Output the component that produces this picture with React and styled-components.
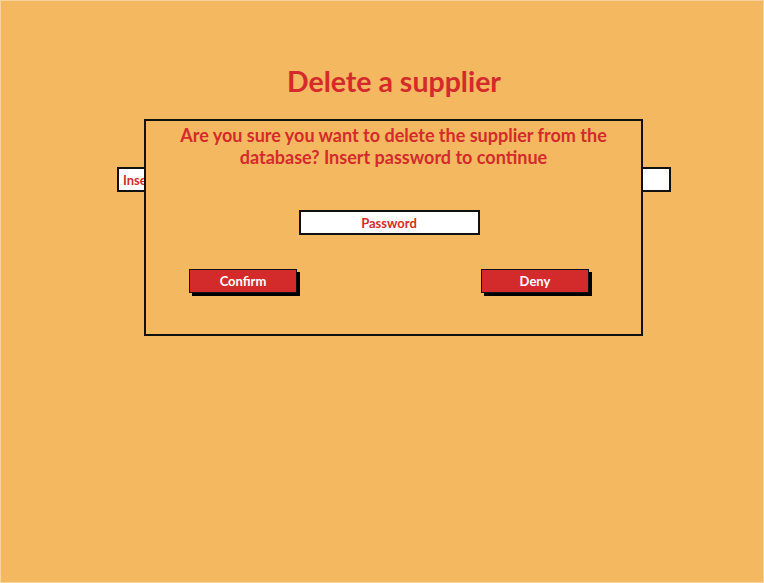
import React from "react";
import styled, { createGlobalStyle } from "styled-components";

const GlobalStyle = createGlobalStyle`
  html, body {
    margin: 0;
    padding: 0;
    background: #ffffff;
  }
  body {
    font-family: Lato, "Open Sans", sans-serif;
  }
`;

const App = () => {
  return (
    <>
      <GlobalStyle />
      <Screen>
        <Title>Delete a supplier</Title>
        <SearchBox>
          <BoxText>Insert supplier name</BoxText>
        </SearchBox>
        <Modal>
          <Message>
            Are you sure you want to delete the supplier from the
            <br />
            database? Insert password to continue
          </Message>
          <PasswordBox>Password</PasswordBox>
          <ButtonRow>
            <ActionButton>Confirm</ActionButton>
            <ActionButton>Deny</ActionButton>
          </ButtonRow>
        </Modal>
      </Screen>
    </>
  );
};

export default App;

const Screen = styled.div`
  position: relative;
  width: 762px;
  height: 581px;
  background-color: #f3b860;
  border: 1px solid #f7d49c;
  display: flex;
  flex-direction: column;
  align-items: center;
  overflow: hidden;
`;
const Title = styled.div`
  font-family: Lato, sans-serif;
  font-size: 28.5px;
  font-weight: 700;
  color: #d32b2b;
  margin: 63px 0px 0px 24px;
  line-height: 35px;
`;
const SearchBox = styled.div`
  box-sizing: border-box;
  width: 554px;
  height: 25px;
  margin: 68px 0px 0px 24px;
  background: #ffffff;
  border: 2px solid #111111;
  display: flex;
  align-items: center;
  padding: 0px 4px;
`;
const BoxText = styled.span`
  font-family: Lato, sans-serif;
  font-size: 13px;
  font-weight: 700;
  color: #d32b2b;
`;
const Modal = styled.div`
  position: absolute;
  left: 143px;
  top: 118px;
  box-sizing: border-box;
  width: 499px;
  height: 217px;
  background-color: #f3b860;
  border: 2px solid #111111;
  display: flex;
  flex-direction: column;
  align-items: center;
`;
const Message = styled.div`
  font-family: Lato, sans-serif;
  font-size: 18px;
  font-weight: 700;
  color: #d32b2b;
  text-align: center;
  line-height: 22px;
  margin: 3px 0px 0px 0px;
`;
const PasswordBox = styled.div`
  box-sizing: border-box;
  width: 181px;
  height: 25px;
  margin: 42px 9px 0px 0px;
  background: #ffffff;
  border: 2px solid #111111;
  display: flex;
  align-items: center;
  justify-content: center;
  font-family: Lato, sans-serif;
  font-size: 13px;
  font-weight: 700;
  color: #d32b2b;
`;
const ButtonRow = styled.div`
  align-self: stretch;
  display: flex;
  justify-content: space-between;
  padding: 0px 52px 0px 43px;
  margin: 34px 0px 0px 0px;
`;
const ActionButton = styled.div`
  box-sizing: border-box;
  width: 108px;
  height: 24px;
  background: #d32b2b;
  border: 1.5px solid #111111;
  box-shadow: 3px 3px 0px #000000;
  display: flex;
  align-items: center;
  justify-content: center;
  font-family: Lato, sans-serif;
  font-size: 13px;
  font-weight: 700;
  color: #ffffff;
`;
